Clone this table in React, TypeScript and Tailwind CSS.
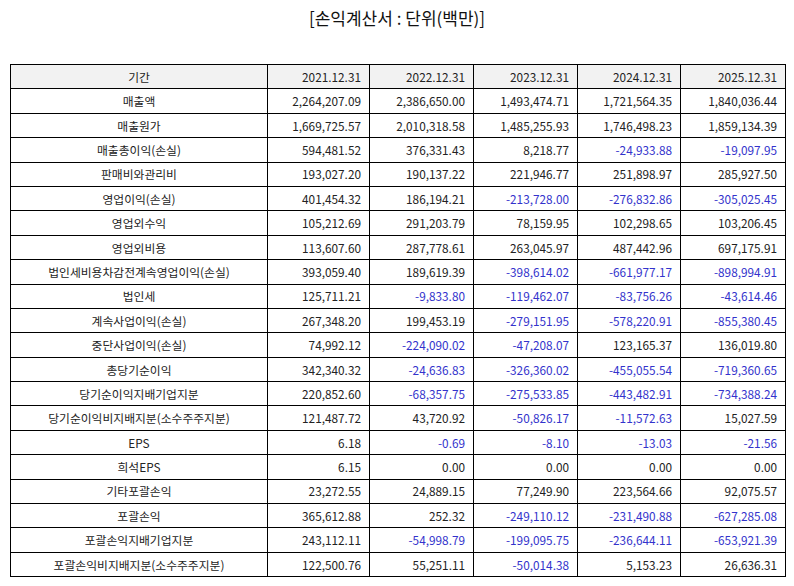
const years = ['2021.12.31', '2022.12.31', '2023.12.31', '2024.12.31', '2025.12.31']

const rows: [string, string[]][] = [
  ['매출액', ['2,264,207.09', '2,386,650.00', '1,493,474.71', '1,721,564.35', '1,840,036.44']],
  ['매출원가', ['1,669,725.57', '2,010,318.58', '1,485,255.93', '1,746,498.23', '1,859,134.39']],
  ['매출총이익(손실)', ['594,481.52', '376,331.43', '8,218.77', '-24,933.88', '-19,097.95']],
  ['판매비와관리비', ['193,027.20', '190,137.22', '221,946.77', '251,898.97', '285,927.50']],
  ['영업이익(손실)', ['401,454.32', '186,194.21', '-213,728.00', '-276,832.86', '-305,025.45']],
  ['영업외수익', ['105,212.69', '291,203.79', '78,159.95', '102,298.65', '103,206.45']],
  ['영업외비용', ['113,607.60', '287,778.61', '263,045.97', '487,442.96', '697,175.91']],
  ['법인세비용차감전계속영업이익(손실)', ['393,059.40', '189,619.39', '-398,614.02', '-661,977.17', '-898,994.91']],
  ['법인세', ['125,711.21', '-9,833.80', '-119,462.07', '-83,756.26', '-43,614.46']],
  ['계속사업이익(손실)', ['267,348.20', '199,453.19', '-279,151.95', '-578,220.91', '-855,380.45']],
  ['중단사업이익(손실)', ['74,992.12', '-224,090.02', '-47,208.07', '123,165.37', '136,019.80']],
  ['총당기순이익', ['342,340.32', '-24,636.83', '-326,360.02', '-455,055.54', '-719,360.65']],
  ['당기순이익지배기업지분', ['220,852.60', '-68,357.75', '-275,533.85', '-443,482.91', '-734,388.24']],
  ['당기순이익비지배지분(소수주주지분)', ['121,487.72', '43,720.92', '-50,826.17', '-11,572.63', '15,027.59']],
  ['EPS', ['6.18', '-0.69', '-8.10', '-13.03', '-21.56']],
  ['희석EPS', ['6.15', '0.00', '0.00', '0.00', '0.00']],
  ['기타포괄손익', ['23,272.55', '24,889.15', '77,249.90', '223,564.66', '92,075.57']],
  ['포괄손익', ['365,612.88', '252.32', '-249,110.12', '-231,490.88', '-627,285.08']],
  ['포괄손익지배기업지분', ['243,112.11', '-54,998.79', '-199,095.75', '-236,644.11', '-653,921.39']],
  ['포괄손익비지배지분(소수주주지분)', ['122,500.76', '55,251.11', '-50,014.38', '5,153.23', '26,636.31']],
]

export default function App() {
  return (
    <div
      className="w-[794px] h-[586px] bg-white text-[#222] pt-[6px]"
      style={{ fontFamily: '"Noto Sans CJK KR", "Noto Sans", sans-serif' }}
    >
      <h1 className="text-center text-[17px] leading-[24px] font-normal text-[#111]">
        [손익계산서 : 단위(백만)]
      </h1>
      <table className="mt-[34px] ml-[10px] w-[775px] border-collapse table-fixed text-[11.8px]">
        <colgroup>
          <col className="w-[257px]" />
          <col className="w-[102px]" />
          <col className="w-[104px]" />
          <col className="w-[104px]" />
          <col className="w-[103px]" />
          <col className="w-[105px]" />
        </colgroup>
        <thead>
          <tr className="h-[24.4px] bg-[#f2f2f2]">
            <th className="border border-black font-normal text-center p-0">기간</th>
            {years.map((y) => (
              <th key={y} className="border border-black font-normal text-right pr-[8px] p-0">
                {y}
              </th>
            ))}
          </tr>
        </thead>
        <tbody>
          {rows.map(([label, vals]) => (
            <tr key={label} className="h-[24.4px]">
              <td className="border border-black text-center p-0">{label}</td>
              {vals.map((v, i) => (
                <td
                  key={i}
                  className={`border border-black text-right pr-[8px] p-0 ${
                    v.startsWith('-') ? 'text-[#3333cc]' : ''
                  }`}
                >
                  {v}
                </td>
              ))}
            </tr>
          ))}
        </tbody>
      </table>
    </div>
  )
}
